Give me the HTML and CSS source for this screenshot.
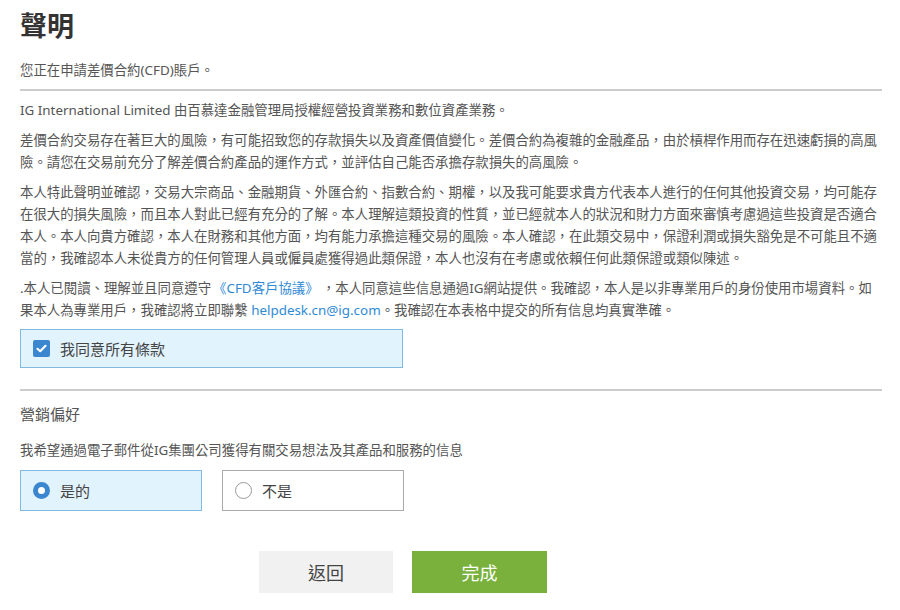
FILE: index.html
```html
<!DOCTYPE html>
<html lang="zh-Hant">
<head>
<meta charset="utf-8">
<link rel="stylesheet" href="styles.css">
</head>
<body>
<main class="page">
  <h1 class="title">聲明</h1>
  <p class="intro">您正在申請差價合約(CFD)賬戶。</p>
  <hr class="rule">
  <section class="terms">
    <p>IG International Limited 由百慕達金融管理局授權經營投資業務和數位資產業務。</p>
    <p>差價合約交易存在著巨大的風險，有可能招致您的存款損失以及資產價值變化。差價合約為複雜的金融產品，由於槓桿作用而存在迅速虧損的高風險。請您在交易前充分了解差價合約產品的運作方式，並評估自己能否承擔存款損失的高風險。</p>
    <p>本人特此聲明並確認，交易大宗商品、金融期貨、外匯合約、指數合約、期權，以及我可能要求貴方代表本人進行的任何其他投資交易，均可能存在很大的損失風險，而且本人對此已經有充分的了解。本人理解這類投資的性質，並已經就本人的狀況和財力方面來審慎考慮過這些投資是否適合本人。本人向貴方確認，本人在財務和其他方面，均有能力承擔這種交易的風險。本人確認，在此類交易中，保證利潤或損失豁免是不可能且不適當的，我確認本人未從貴方的任何管理人員或僱員處獲得過此類保證，本人也沒有在考慮或依賴任何此類保證或類似陳述。</p>
    <p>.本人已閱讀、理解並且同意遵守<a class="link link-doc" href="#">《CFD客戶協議》</a>，本人同意這些信息通過IG網站提供。我確認，本人是以非專業用戶的身份使用市場資料。如果本人為專業用戶，我確認將立即聯繫 <a class="link" href="#">helpdesk.cn@ig.com</a>。我確認在本表格中提交的所有信息均真實準確。</p>
  </section>
  <label class="choice choice-check selected">
    <span class="checkbox">
      <svg width="11" height="9" viewBox="0 0 11 9"><path d="M1.5 4.8 L4.2 7.2 L9.5 1.8" fill="none" stroke="#fff" stroke-width="2.2" stroke-linecap="round" stroke-linejoin="round"/></svg>
    </span>
    <span class="choice-label">我同意所有條款</span>
  </label>
  <hr class="rule rule-second">
  <h2 class="subtitle">營銷偏好</h2>
  <p class="question">我希望通過電子郵件從IG集團公司獲得有關交易想法及其產品和服務的信息</p>
  <div class="radios">
    <label class="choice choice-radio selected">
      <span class="radio radio-on"></span>
      <span class="choice-label">是的</span>
    </label>
    <label class="choice choice-radio">
      <span class="radio"></span>
      <span class="choice-label">不是</span>
    </label>
  </div>
  <div class="actions">
    <button class="btn btn-back" type="button">返回</button>
    <button class="btn btn-done" type="button">完成</button>
  </div>
</main>
</body>
</html>
```
FILE: styles.css
```css
* { box-sizing: border-box; }
html, body { margin: 0; padding: 0; background: #fff; }
body {
  font-family: "Noto Sans", "Noto Sans CJK TC", sans-serif;
  color: #555;
}
.page {
  width: 862px;
  margin-left: 20px;
  padding-top: 5px;
}
.title {
  margin: 0;
  font-family: "Noto Sans CJK TC", sans-serif;
  font-size: 27px;
  font-weight: 700;
  line-height: 40px;
  color: #333;
}
.intro {
  margin: 14px 0 0;
  font-size: 13.4px;
  line-height: 22px;
}
.rule {
  margin: 8px 0 0;
  border: 0;
  height: 2px;
  background: #cccccc;
}
.terms {
  margin-top: 8px;
}
.terms p {
  margin: 0 0 8px;
  font-size: 13.4px;
  line-height: 22px;
}
.link {
  color: #2f8ad6;
  text-decoration: none;
}
.link-doc {
  margin: 0 10px 0 2px;
}
.choice {
  display: flex;
  align-items: center;
  gap: 10px;
  height: 40px;
  padding-left: 12px;
  border: 1px solid #aaa;
  background: #fff;
  color: #444;
  font-size: 15px;
}
.choice.selected {
  background: #e1f3fd;
  border-color: #80b9e2;
}
.choice-check {
  width: 383px;
  height: 39px;
  margin-top: 5px;
}
.checkbox {
  width: 17px;
  height: 17px;
  border-radius: 2px;
  background: #3a86cf;
  display: flex;
  align-items: center;
  justify-content: center;
}
.rule-second {
  margin-top: 21px;
}
.subtitle {
  margin: 12px 0 0;
  font-size: 15px;
  font-weight: 400;
  line-height: 22px;
  color: #555;
}
.question {
  margin: 14px 0 0;
  font-size: 13.4px;
  line-height: 22px;
}
.radios {
  display: flex;
  gap: 20px;
  margin-top: 9px;
}
.choice-radio {
  width: 182px;
  height: 41px;
}
.radio {
  width: 17px;
  height: 17px;
  border-radius: 50%;
  border: 1px solid #999;
  background: #fff;
}
.radio-on {
  border: 5px solid #3a86cf;
}
.actions {
  display: flex;
  gap: 19px;
  margin-top: 40px;
  padding-left: 239px;
}
.btn {
  width: 134px;
  height: 42px;
  border: 0;
  font-family: "Noto Sans CJK TC", sans-serif;
  font-size: 18px;
  cursor: pointer;
}
.btn-back {
  background: #f1f1f1;
  color: #444;
}
.btn-done {
  width: 135px;
  background: #79b13c;
  color: #fff;
}
```
